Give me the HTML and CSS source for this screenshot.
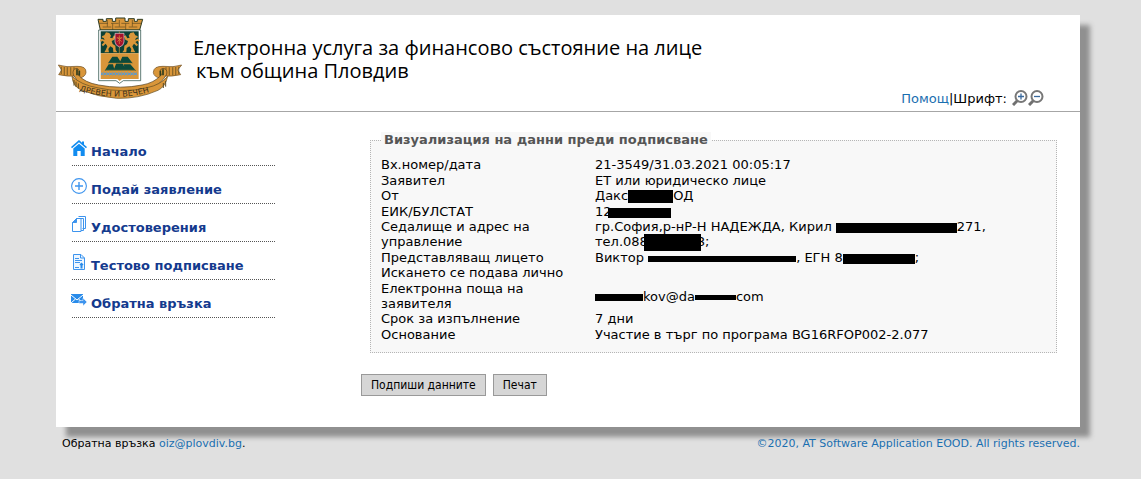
FILE: index.html
```
<!DOCTYPE html>
<html lang="bg">
<head>
    <meta charset="UTF-8">
    <meta name="viewport" content="width=device-width, initial-scale=1.0">
    <title>Електронна услуга за финансово състояние на лице</title>
    <link rel="stylesheet" href="styles.css">
</head>
<body>
    <div class="page">
        <header class="header">
            <svg class="logo" viewBox="24 21 375 255" aria-hidden="true">
                <!-- ribbon -->
                <path d="M25 171q24 8 56 4q28-1 27 18q-1 14-22 18l-6-7q-28 2-54-4l9-14z" fill="#d9963a" stroke="#6b4a1d" stroke-width="2"/>
                <path d="M395 171q-24 8-56 4q-28-1-29 18q1 14 22 18l6-7q28 2 54-4l-9-14z" fill="#d9963a" stroke="#6b4a1d" stroke-width="2"/>
                <path d="M34 176v22M43 177v24M52 178v24M62 178v24M72 178v24M386 176v22M377 177v24M368 178v24M358 178v24M348 178v24" stroke="#5d4a20" stroke-width="4" opacity=".6"/>
                <path d="M81 181q-16 2-11 20q18 34 68 44q78 18 154-2q40-10 58-44q4-16-11-18q-13 2-5 20q-22 24-58 30q-64 13-130 0q-42-7-61-30q7-15-4-20z" fill="#d9963a" stroke="#4f3b1c" stroke-width="2"/>
                <path d="M81 184v18M88 188v15M339 184v18M331 188v15" stroke="#2f3d1e" stroke-width="5"/>
                <path d="M66 205q2 30 29 42q50 20 105 24q66 2 124-24q22-10 29-42q-22 26-62 34q-72 18-150 0q-47-8-75-34z" fill="#d9963a" stroke="#5d4a20" stroke-width="2"/>
                <path d="M72 216v17M78 221v16M85 226v15M340 225v15M347 219v17" stroke="#5d4a20" stroke-width="3"/>
                <path id="motto" d="M88 248q56 18 122 18q66-1 126-28" fill="none"/>
                <text class="logo-motto"><textPath href="#motto">ДРЕВЕН И ВЕЧЕН</textPath></text>
                <!-- crown -->
                <path d="M151 66l-7-32h15v6h10v-8h18v8h10v-10h28v10h10v-8h18v8h9v-6h16l-9 32z" fill="#d9963a" stroke="#2d3b22" stroke-width="3"/>
                <path d="M147 46h27M183 46h23M214 46h24M246 46h29M158 57h26M194 57h32M236 57h26M172 36v20M188 46v20M208 36v20M227 46v20M247 36v20" stroke="#5d4a20" stroke-width="2"/>
                <!-- shield -->
                <path d="M146 66h126v152h-52l-11 8l-11-8h-52z" fill="#fff" stroke="#123c34" stroke-width="2"/>
                <path d="M152 70h114v66h-114z" fill="#0c4035"/>
                <path d="M152 136h114v77h-50l-7 6l-7-6h-50z" fill="#d9963a"/>
                <path d="M208 70v66" stroke="#d9963a" stroke-width="2"/>
                <path d="M163 82l5-9l10 2l5 8l-3 6l7 2l5-9l5 3l-4 10l-8 4l3 9l8 5l1 13l5 7h-12l-1-13l-8-5l-6 8l2 10h-14l4-7l5-11l-5-8l-8 8l-4-5l8-8l-7-4l-3 5l-3-6l5-5l9 4l-3-6l-6-2l2-4z" fill="#d9963a"/>
                <path d="M256 82l-5-9l-10 2l-5 8l3 6l-7 2l-5-9l-5 3l4 10l8 4l-3 9l-8 5l-1 13l-5 7h12l1-13l8-5l6 8l-2 10h14l-4-7l-5-11l5-8l8 8l4-5l-8-8l7-4l3 5l3-6l-5-5l-9 4l3-6l6-2l-2-4z" fill="#d9963a"/>
                <path d="M195 76h27v26q-1 11-13 15q-13-4-14-15z" fill="#a5122d" stroke="#ddd" stroke-width="2"/>
                <path d="M208 82v26M200 90h17M202 101l13-13M202 88l13 13" stroke="#d9963a" stroke-width="2"/>
                <!-- hills -->
                <path d="M174 166l13-20h15l13 20zM208 166l9-20h16l15 20z" fill="#0c4a3b"/>
                <path d="M164 188l12-19h13l5 19zM190 188l10-25h16l13 25zM226 188l-5-19h20l17 19z" fill="#0c4a3b"/>
                <path d="M176 166h70M166 187h90" stroke="#d9963a" stroke-width="2"/>
                <path d="M153 194l8 7l9-7l9 7l9-7l9 7l9-7l9 7l9-7l9 7l9-7l9 7l10-7M153 201l8-7l9 7l9-7l9 7l9-7l9 7l9-7l9 7l9-7l9 7l9-7l10 7" fill="none" stroke="#4d9be0" stroke-width="3"/>
            </svg>
            <h1>Електронна услуга за финансово състояние на лице <span>към община Пловдив</span></h1>
            <div class="tools">
                <a href="#">Помощ</a><span class="divider">|</span><span>Шрифт:</span>
                <button class="zoom" type="button" aria-label="Увеличи шрифта">
                    <svg viewBox="0 0 16 16"><path d="M6 10L1 15" stroke="#707070" stroke-width="3"/><circle cx="9" cy="6.500" r="5.500" fill="#fff" stroke="#777" stroke-width="2"/><path d="M6 6.500h6M9 3.500v6" stroke="#39699d" stroke-width="1.300"/></svg>
                </button>
                <button class="zoom" type="button" aria-label="Намали шрифта">
                    <svg viewBox="0 0 16 16"><path d="M6 10L1 15" stroke="#707070" stroke-width="3"/><circle cx="9" cy="6.500" r="5.500" fill="#fff" stroke="#777" stroke-width="2"/><path d="M6 6.500h6" stroke="#39699d" stroke-width="1.300"/></svg>
                </button>
            </div>
        </header>

        <div class="columns">
            <nav class="menu">
                <a href="#">
                    <svg viewBox="0 0 16 16" fill="#118cf0"><path d="M8 0L0 7l1 1.300L8 2.300l7 6L16 7l-3-2.600V1.500h-2v1.200z"/><path d="M8 3.700L2.300 8.600V16h4v-5h3.400v5h4V8.600z"/></svg>
                    <span>Начало</span>
                </a>
                <a href="#">
                    <svg viewBox="0 0 16 16" fill="none" stroke="#3d94ee"><circle cx="8" cy="8" r="7.400" stroke-width="1.100"/><path d="M8 4v8M4 8h8" stroke-width="1.400"/></svg>
                    <span>Подай заявление</span>
                </a>
                <a href="#">
                    <svg viewBox="0 0 16 16" fill="#fff" stroke="#3d94ee"><path d="M7.500.5h7v12h-3M5.500 2.500h7v12h-3"/><path d="M1.500 6.500l4-4h4.500v13H1.500z"/><path d="M1.500 6.500h4v-4z" fill="#3d94ee"/></svg>
                    <span>Удостоверения</span>
                </a>
                <a href="#">
                    <svg viewBox="0 0 16 16" fill="none" stroke="#3d94ee"><path d="M2.500.5h7.500l3.500 3.500v11.500h-11z" fill="#edf6ff"/><path d="M9.500.5V4h4M4 4.500h4M4 6.500h7M4 8.500h5M4 13.500h4"/><path d="M10.500 8.500l2 2l-1 1v3h-2v-3l-1-1z" fill="#288bea" stroke="none"/></svg>
                    <span>Тестово подписване</span>
                </a>
                <a href="#">
                    <svg viewBox="0 0 16 16"><path d="M0 2h12v9H0z" fill="#288bea"/><path d="M0 3l6 5l6-5M0 11l4.500-4M12 11L7.500 7" fill="none" stroke="#fff"/><path d="M8 8.500h4V6l4 4l-4 4v-2.500H8z" fill="#3d94ee" stroke="#fff" stroke-width=".5"/></svg>
                    <span>Обратна връзка</span>
                </a>
            </nav>

            <main class="content">
                <fieldset>
                    <legend>Визуализация на данни преди подписване</legend>
                    <table>
                        <tr><th scope="row">Вх.номер/дата</th><td>21-3549/31.03.2021 00:05:17</td></tr>
                        <tr><th scope="row">Заявител</th><td>ЕТ или юридическо лице</td></tr>
                        <tr><th scope="row">От</th><td>Дакс<span class="bar bar-company"></span>ОД</td></tr>
                        <tr><th scope="row">ЕИК/БУЛСТАТ</th><td>12<span class="bar bar-over bar-number"></span></td></tr>
                        <tr><th scope="row">Седалище и адрес на управление</th><td>гр.София,р-нР-Н НАДЕЖДА, Кирил <span class="bar bar-street"></span>271,<br>тел.088<span class="bar bar-over bar-phone"></span>8;</td></tr>
                        <tr><th scope="row">Представляващ лицето</th><td>Виктор <span class="bar bar-name"></span>, ЕГН 8<span class="bar bar-egn"></span>;</td></tr>
                        <tr><th scope="row">Искането се подава лично</th><td></td></tr>
                        <tr><th scope="row">Електронна поща на заявителя</th><td><span class="bar bar-user"></span>kov@da<span class="bar bar-domain"></span>com</td></tr>
                        <tr><th scope="row">Срок за изпълнение</th><td>7 дни</td></tr>
                        <tr><th scope="row">Основание</th><td>Участие в търг по програма BG16RFOP002-2.077</td></tr>
                    </table>
                </fieldset>
                <div class="actions">
                    <button type="button">Подпиши данните</button>
                    <button type="button">Печат</button>
                </div>
            </main>
        </div>
    </div>

    <footer class="footer">
        <span>Обратна връзка <a href="mailto:oiz@plovdiv.bg">oiz@plovdiv.bg</a>.</span>
        <a href="#">©2020, AT Software Application EOOD. All rights reserved.</a>
    </footer>
</body>
</html>
```
FILE: styles.css
```
body {
    margin: 0;
    padding: 15px 61px 0 56px;
    background: #e0e0e0;
    color: #000;
    font-family: Verdana, "DejaVu Sans", sans-serif;
    font-size: 13px;
    line-height: 15px;
}
a {
    color: #1a6fb0;
    text-decoration: none;
}
.page {
    background: #fff;
    box-shadow: 10px 10px 5px #909090;
    padding-bottom: 31px;
}
.header {
    display: flex;
    align-items: flex-start;
    border-bottom: 1px solid #a6a6a6;
    min-height: 96px;
    padding-left: 2px;
}
.logo {
    width: 125px;
    height: 85px;
    flex: none;
}
.logo-motto {
    font-family: "DejaVu Sans", sans-serif;
    font-size: 24px;
    fill: #3d321c;
}
h1 {
    flex: 1;
    margin: 21px 0 0 10px;
    font-family: "Open Sans", "Noto Sans", sans-serif;
    font-size: 20px;
    font-weight: normal;
    line-height: 23px;
    white-space: nowrap;
}
h1 span {
    display: block;
    padding-left: 3px;
}
.tools {
    display: flex;
    align-self: flex-end;
    align-items: center;
    padding: 0 36px 5px 0;
}
.zoom {
    width: 16px;
    height: 16px;
    padding: 0;
    border: 0;
    background: none;
}
.tools span + .zoom {
    margin-left: 5px;
}
.zoom svg {
    display: block;
}
.columns {
    display: flex;
    padding: 16px 23px 0 16px;
}
.menu {
    width: 203px;
    flex: none;
}
.menu a {
    display: flex;
    align-items: flex-start;
    gap: 4px;
    height: 25px;
    padding-top: 12px;
    border-bottom: 1px dotted #555;
    color: #143a8e;
    font-weight: bold;
}
.menu svg {
    width: 16px;
    height: 16px;
    margin-left: -1px;
}
.menu span {
    padding-top: 4px;
}
.content {
    flex: 1;
    margin-left: 86px;
    padding-top: 4px;
}
fieldset {
    margin: 0 0 0 9px;
    padding: 9px 10px 10px;
    border: 1px dotted #b5b5b5;
    background: #f8f8f8;
}
legend {
    padding: 0 3px;
    background: #f8f8f8;
    color: #555;
    font-weight: bold;
    line-height: 16px;
}
table {
    width: 100%;
    border-collapse: collapse;
}
th {
    width: 190px;
    padding: 0 24px 0 0;
    font-weight: normal;
    text-align: left;
}
td {
    padding: 0;
    white-space: nowrap;
}
tr:nth-child(odd) > * {
    padding-bottom: 1px;
}
/* blacked out data */
.bar {
    display: inline-block;
    height: 10px;
    margin: -4px 0;
    background: #000;
    vertical-align: middle;
}
.bar-over {
    margin: -4px;
}
.bar-company {
    width: 45px;
    height: 13px;
}
.bar-number {
    width: 63px;
}
.bar-street {
    width: 121px;
}
.bar-phone {
    width: 57px;
    height: 17px;
}
.bar-name {
    width: 148px;
    height: 6px;
}
.bar-egn {
    width: 72px;
}
.bar-user {
    width: 48px;
    height: 7px;
}
.bar-domain {
    width: 41px;
    height: 5px;
}
.actions {
    display: flex;
    gap: 7px;
    margin-top: 21px;
}
.actions button {
    height: 22px;
    padding: 0 9px;
    border: 1px solid #999;
    background: #d6d6d6;
    color: #000;
    font-family: Tahoma, "DejaVu Sans Condensed", "DejaVu Sans", sans-serif;
    font-size: 12px;
}
.footer {
    display: flex;
    justify-content: space-between;
    padding: 9px 0 0 6px;
    font-size: 11px;
}
```
